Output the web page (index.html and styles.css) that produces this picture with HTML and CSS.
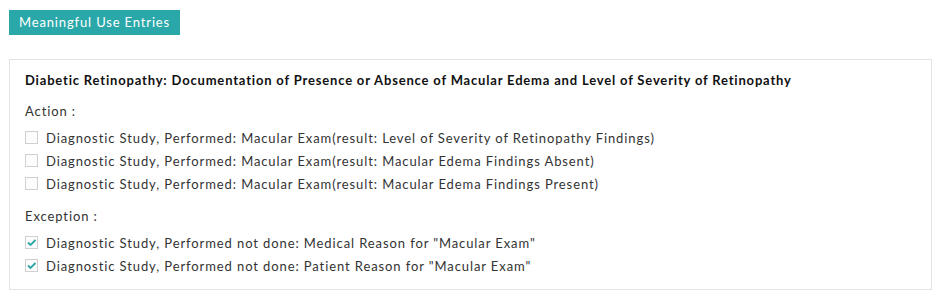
FILE: index.html
```html
<!DOCTYPE html>
<html>
<head>
<meta charset="utf-8">
<link rel="stylesheet" href="styles.css">
</head>
<body>
<div class="page">
  <div class="btn">Meaningful Use Entries</div>
  <div class="panel">
    <div class="title">Diabetic Retinopathy: Documentation of Presence or Absence of Macular Edema and Level of Severity of Retinopathy</div>
    <div class="group group-first">
      <div class="label">Action :</div>
      <label class="row"><span class="cb"></span><span>Diagnostic Study, Performed: Macular Exam(result: Level of Severity of Retinopathy Findings)</span></label>
      <label class="row"><span class="cb"></span><span>Diagnostic Study, Performed: Macular Exam(result: Macular Edema Findings Absent)</span></label>
      <label class="row"><span class="cb"></span><span>Diagnostic Study, Performed: Macular Exam(result: Macular Edema Findings Present)</span></label>
    </div>
    <div class="group">
      <div class="label">Exception :</div>
      <label class="row"><span class="cb checked"><svg viewBox="0 0 13 13" width="13" height="13"><path d="M3 6.5 L5.5 9 L10.5 4" fill="none" stroke="#2aa8a8" stroke-width="1.8"/></svg></span><span>Diagnostic Study, Performed not done: Medical Reason for "Macular Exam"</span></label>
      <label class="row"><span class="cb checked"><svg viewBox="0 0 13 13" width="13" height="13"><path d="M3 6.5 L5.5 9 L10.5 4" fill="none" stroke="#2aa8a8" stroke-width="1.8"/></svg></span><span>Diagnostic Study, Performed not done: Patient Reason for "Macular Exam"</span></label>
    </div>
  </div>
</div>
</body>
</html>
```
FILE: styles.css
```css
html, body {
  margin: 0;
  padding: 0;
  background: #ffffff;
}
.page {
  padding: 10px 8px 0 9px;
  font-family: Lato, "Liberation Sans", sans-serif;
  font-size: 13px;
  letter-spacing: 0.9px;
  color: #333333;
}
.btn {
  display: inline-block;
  background: #2aa8a9;
  color: #ffffff;
  font-size: 13px;
  line-height: 25px;
  height: 25px;
  padding: 0 10px 0 10px;
  letter-spacing: 0.85px;
}
.panel {
  margin-top: 24px;
  border: 1px solid #e3e3e3;
  padding: 11px 15px 12px 15px;
  width: 891px;
}
.title {
  font-weight: bold;
  color: #111111;
  line-height: 18px;
  letter-spacing: 0.82px;
}
.group {
  margin-top: 12px;
}
.group-first {
  margin-top: 13px;
}
.label {
  line-height: 18px;
  margin-bottom: 6px;
}
.row {
  display: flex;
  align-items: center;
  height: 23px;
  gap: 8px;
}
.cb {
  width: 11px;
  height: 11px;
  border: 1px solid #d0d0d0;
  background: #fcfcfc;
  flex: none;
  position: relative;
}
.cb svg {
  position: absolute;
  left: -1px;
  top: -1px;
}
```
